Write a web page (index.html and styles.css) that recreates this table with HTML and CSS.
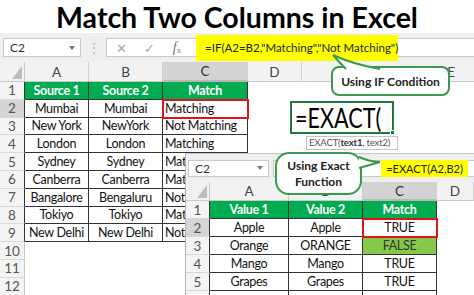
FILE: index.html
```html
<!DOCTYPE html>
<html>
<head>
<meta charset="utf-8">
<link rel="stylesheet" href="styles.css">
</head>
<body>
<h1 class="title">Match Two Columns in Excel</h1>

<div class="fbar">
  <div class="namebox"><span>C2</span><span class="dd"></span></div>
  <div class="dots">⋮</div>
  <div class="fbox">
    <span class="ic">✕</span><span class="ic">✓</span><span class="ic fx"><i>f</i><sub>x</sub></span>
    <span class="formula">=IF(A2=B2,"Matching","Not Matching")</span>
  </div>
</div>

<div class="sheet main">
  <div class="corner"><span class="tri"></span></div><div class="ch">A</div><div class="ch">B</div><div class="ch on">C</div><div class="ch">D</div><div class="ch e">E</div>

  <div class="rh t">1</div><div class="d hd">Source 1</div><div class="d hd">Source 2</div><div class="d hd">Match</div><div></div><div></div>
  <div class="rh t on">2</div><div class="d">Mumbai</div><div class="d">Mumbai</div><div class="d l sel">Matching</div><div></div><div></div>
  <div class="rh t">3</div><div class="d">New York</div><div class="d">NewYork</div><div class="d l">Not Matching</div><div></div><div></div>
  <div class="rh t">4</div><div class="d">London</div><div class="d">London</div><div class="d l">Matching</div><div></div><div></div>
  <div class="rh t">5</div><div class="d">Sydney</div><div class="d">Sydney</div><div class="d l">Matching</div><div></div><div></div>
  <div class="rh t">6</div><div class="d">Canberra</div><div class="d">Canberra</div><div class="d l">Matching</div><div></div><div></div>
  <div class="rh t">7</div><div class="d">Bangalore</div><div class="d">Bengaluru</div><div class="d l">Not Matching</div><div></div><div></div>
  <div class="rh t">8</div><div class="d">Tokiyo</div><div class="d">Tokiyo</div><div class="d l">Matching</div><div></div><div></div>
  <div class="rh t">9</div><div class="d">New Delhi</div><div class="d">New Delhi</div><div class="d l">Not Matching</div><div></div><div></div>
  <div class="rh">10</div><div></div><div></div><div></div><div></div><div></div>
  <div class="rh">11</div><div></div><div></div><div></div><div></div><div></div>
  <div class="rh">12</div><div></div><div></div><div></div><div></div><div></div>
</div>

<div class="exact"><span class="exact-txt">=EXACT(</span><span class="handle"></span></div>
<div class="tip">EXACT(<b>text1</b>, text2)</div>

<div class="bubble if">Using IF Condition</div>
<svg class="tail tail-if" width="60" height="20" viewBox="330 53 60 20">
  <path d="M346 69 Q339 62 333 55 Q352 64 380 69" fill="#fff" stroke="#3b9a4b" stroke-width="2"/>
</svg>

<div class="sheet2">
  <div class="fbar2">
    <div class="namebox small"><span>C2</span><span class="dd"></span></div>
    <div class="fbox2"><span class="formula2">=EXACT(A2,B2)</span></div>
  </div>
  <div class="grid2">
    <div class="corner"><span class="tri"></span></div><div class="ch">A</div><div class="ch">B</div><div class="ch on">C</div><div class="ch">D</div>
    <div class="rh t">1</div><div class="d hd">Value 1</div><div class="d hd">Value 2</div><div class="d hd">Match</div><div></div>
    <div class="rh t on">2</div><div class="d">Apple</div><div class="d">Apple</div><div class="d sel">TRUE</div><div></div>
    <div class="rh t">3</div><div class="d">Orange</div><div class="d">ORANGE</div><div class="d fal">FALSE</div><div></div>
    <div class="rh t">4</div><div class="d">Mango</div><div class="d">Mango</div><div class="d">TRUE</div><div></div>
    <div class="rh t">5</div><div class="d">Grapes</div><div class="d">Grapes</div><div class="d">TRUE</div><div></div>
    <div class="rh t">6</div><div class="d"></div><div class="d"></div><div class="d"></div><div></div>
  </div>
</div>

<div class="bubble ex">Using Exact<br>Function</div>
<svg class="tail tail-ex" width="24" height="16" viewBox="358 155 24 16">
  <path d="M359 157 Q370 162 380 162 Q370 165 359 168" fill="#fff" stroke="#3b9a4b" stroke-width="2"/>
</svg>
</body>
</html>
```
FILE: styles.css
```css
* { box-sizing: border-box; margin: 0; padding: 0; }
html, body { width: 474px; height: 295px; overflow: hidden; background: #fff; }
body { font-family: Lato, "Open Sans", sans-serif; color: #111; position: relative; }

.title { font-size: 28.5px; font-weight: 700; text-align: center; line-height: 33px; height: 33px; color: #000; white-space: nowrap; padding-top: 1px; }

.fbar { height: 29px; background: #efefef; display: flex; align-items: center; }
.namebox { margin-left: 3px; width: 78px; height: 19px; background: #fff; border: 1px solid #c9c9c9; display: flex; align-items: center; justify-content: space-between; padding: 0 5px 0 6px; font-size: 12px; color: #333; }
.dd { width: 0; height: 0; border-left: 3px solid transparent; border-right: 3px solid transparent; border-top: 4px solid #777; }
.dots { width: 25px; text-align: center; color: #b0b0b0; font-size: 12px; }
.fbox { flex: 1; min-width: 0; height: 19px; background: #fff; border: 1px solid #c9c9c9; border-right: none; display: flex; align-items: center; }
.ic { width: 28px; text-align: center; color: #a8a8a8; font-size: 13px; }
.fx { font-family: "Liberation Serif", serif; color: #777; font-size: 14px; }
.fx sub { font-size: 9px; vertical-align: -1px; }
.formula { margin-left: 5px; height: 26px; line-height: 26px; background: #ffff00; padding: 0 8px 0 9px; font-size: 11.5px; color: #222; white-space: nowrap; width: 202px; }

.sheet { display: grid; }
.main { grid-template-columns: 25px 64px 74px 85px 54px 172px; grid-template-rows: 20px repeat(12, 17.8px); width: 474px; }
.sheet > div, .grid2 > div { display: flex; align-items: center; justify-content: center; white-space: nowrap; overflow: hidden; font-size: 12.5px; letter-spacing: -0.3px; }

.corner { background: #f2f2f2; border-right: 1px solid #c8c8c8; border-bottom: 1px solid #c8c8c8; position: relative; }
.tri { position: absolute; right: 2px; bottom: 2px; width: 0; height: 0; border-left: 10px solid transparent; border-bottom: 13px solid #bdbdbd; }
.sheet > .ch, .grid2 > .ch { background: #f2f2f2; border-right: 1px solid #d0d0d0; border-bottom: 1px solid #c8c8c8; color: #444; font-size: 13.5px; letter-spacing: 0; }
.sheet > .ch.e { justify-content: flex-end; padding-right: 19px; border-right: none; }
.sheet > .ch.on, .grid2 > .ch.on { background: #d3d3d3; color: #333; border-bottom: 2px solid #b8b8b8; }
.sheet > .rh, .grid2 > .rh { background: #f4f4f4; border-right: 1px solid #c8c8c8; border-bottom: 1px solid #d8d8d8; color: #555; font-size: 13.5px; letter-spacing: 0; }
.rh.t { border-right-color: #333 !important; }
.rh.on { background: #d5d5d5 !important; }
.d { border-right: 1px solid #333; border-bottom: 1px solid #333; color: #111; }
.sheet > .d.l { justify-content: flex-start; padding-left: 2px; }
.hd { background: #00ac4f; color: #fff; font-weight: 700; }
.sel { outline: 2px solid #e0151b; outline-offset: -1px; position: relative; z-index: 1; }
.fal { background: #86c84a; color: #333; }

.exact { position: absolute; left: 290px; top: 101px; width: 104px; height: 33px; border: 2px solid #1f7a3d; background: #fff; padding-left: 3px; color: #000; }
.exact-txt { display: inline-block; font-size: 27px; line-height: 29px; transform: scaleX(0.8); transform-origin: left center; white-space: nowrap; }
.handle { position: absolute; right: -3px; bottom: -3px; width: 5px; height: 5px; background: #1f7a3d; border: 1px solid #fff; }
.tip { position: absolute; left: 306px; top: 136px; width: 92px; height: 14px; border: 1px solid #c4c4c4; background: #fff; font-size: 9.5px; line-height: 12px; color: #555; padding-left: 2px; white-space: nowrap; overflow: hidden; letter-spacing: -0.15px; }
.tip b { color: #333; }

.bubble { position: absolute; background: #fff; border: 2px solid #3b9a4b; font-weight: 700; font-size: 12px; color: #222; text-align: center; display: flex; align-items: center; justify-content: center; }
.bubble.if { left: 331px; top: 66px; width: 119px; height: 30px; border-radius: 8px; }
.bubble.ex { left: 275px; top: 152px; width: 87px; height: 43px; border-radius: 14px; line-height: 16px; z-index: 3; }
.tail { position: absolute; overflow: visible; }
.tail-if { left: 330px; top: 53px; }
.tail-ex { left: 358px; top: 155px; z-index: 4; }

.sheet2 { position: absolute; left: 185px; top: 153px; width: 289px; height: 142px; background: #fff; border-left: 1px solid #b5b5b5; border-top: 1px solid #c8c8c8; z-index: 2; overflow: hidden; }
.fbar2 { height: 28px; background: #efefef; display: flex; align-items: center; }
.namebox.small { margin-left: 2px; width: 81px; height: 17px; }
.fbox2 { flex: 1; margin-left: 4px; height: 17px; background: #fff; border: 1px solid #c9c9c9; border-right: none; display: flex; align-items: center; justify-content: flex-end; }
.formula2 { height: 17px; line-height: 17px; background: #ffff00; padding: 0 4px; font-size: 11px; color: #222; margin-right: 6px; width: 87px; text-align: center; white-space: nowrap; }
.grid2 { display: grid; grid-template-columns: 24px 79px 74px 74px 1fr; grid-template-rows: 19px repeat(6, 18px); }
```
